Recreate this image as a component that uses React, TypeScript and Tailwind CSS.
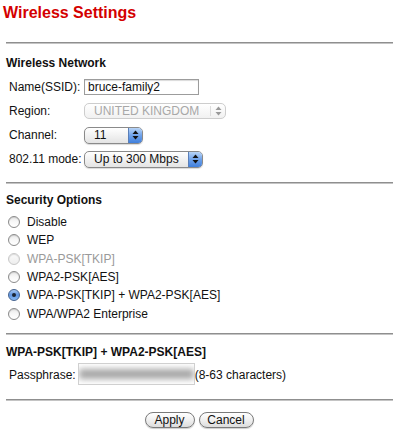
import React from "react";

const font = { fontFamily: '"Liberation Sans", Arial, sans-serif' };

function Hr() {
  return <div className="ml-[6px] w-[387px] h-[2px] border-t border-[#8f8f8f] bg-[#c4c4c4]" />;
}

function Arrows({ color = "#111" }: { color?: string }) {
  return (
    <svg width="7" height="10" viewBox="0 0 7 10">
      <path d="M3.5 0.5 L6.5 4 L0.5 4 Z" fill={color} />
      <path d="M3.5 9.5 L6.5 6 L0.5 6 Z" fill={color} />
    </svg>
  );
}

function Select({ value, width }: { value: string; width: string }) {
  return (
    <div
      className={`${width} h-[17px] flex items-stretch rounded-[5px] border border-[#8a8a8a] bg-gradient-to-b from-[#ffffff] to-[#e4e4e4] shadow-[0_1px_1px_rgba(0,0,0,0.15)] overflow-hidden`}
    >
      <div className="flex-1 pl-[9px] flex items-center text-[12px] text-[#111] leading-none">{value}</div>
      <div className="w-[14px] flex items-center justify-center border-l border-[#5a7fb8] bg-gradient-to-b from-[#b8d4f6] via-[#6fa2ea] to-[#3f7fdc]">
        <Arrows />
      </div>
    </div>
  );
}

function Radio({ checked = false, disabled = false }: { checked?: boolean; disabled?: boolean }) {
  if (checked) {
    return (
      <div className="w-[12px] h-[12px] rounded-full border border-[#43628f] bg-gradient-to-b from-[#a8c8f0] via-[#5d93e0] to-[#8cbcf4] flex items-center justify-center">
        <div className="w-[4px] h-[4px] rounded-full bg-[#1b2432]" />
      </div>
    );
  }
  return (
    <div
      className={`w-[12px] h-[12px] rounded-full border ${
        disabled ? "border-[#c8c8c8] bg-gradient-to-b from-[#fafafa] to-[#eeeeee]" : "border-[#8b8b8b] bg-gradient-to-b from-[#e9e9e9] via-[#f8f8f8] to-[#ffffff]"
      } shadow-[inset_0_1px_1px_rgba(0,0,0,0.12)]`}
    />
  );
}

function RadioRow({ label, checked, disabled }: { label: string; checked?: boolean; disabled?: boolean }) {
  return (
    <div className="h-[18.3px] flex items-center pl-[8px]">
      <Radio checked={checked} disabled={disabled} />
      <span className={`ml-[7px] text-[12px] ${disabled ? "text-[#9a9a9a]" : "text-[#111]"}`}>{label}</span>
    </div>
  );
}

export default function App() {
  return (
    <div className="w-[400px] h-[446px] bg-white overflow-hidden" style={font}>
      <div className="pt-[4px] pl-[3px] h-[22px] text-[16px] leading-[18px] font-bold text-[#d40000]">Wireless Settings</div>
      <div className="mt-[20px]">
        <Hr />
      </div>
      <div className="mt-[7px] h-[24px] flex items-center pl-[6px] text-[12px] font-bold text-[#111]">Wireless Network</div>
      <div className="h-[24px] flex items-center pl-[9px] text-[12px] text-[#111]">
        <div className="w-[75px]">Name(SSID):</div>
        <div className="w-[115px] h-[16px] border border-[#9c9c9c] shadow-[inset_0_1px_1px_rgba(0,0,0,0.15)] bg-white flex items-center pl-[3px] text-[12px]">
          bruce-family2
        </div>
      </div>
      <div className="h-[24px] flex items-center pl-[9px] text-[12px] text-[#111]">
        <div className="w-[75px]">Region:</div>
        <div className="w-[142px] h-[16px] flex items-stretch rounded-[5px] border border-[#cdcdcd] bg-gradient-to-b from-[#ffffff] to-[#f1f1f1]">
          <div className="flex-1 pl-[9px] flex items-center text-[12px] text-[#a8a8a8]">UNITED KINGDOM</div>
          <div className="w-[15px] my-[2px] flex items-center justify-center border-l border-[#dddddd]">
            <Arrows color="#9a9a9a" />
          </div>
        </div>
      </div>
      <div className="h-[24px] flex items-center pl-[9px] text-[12px] text-[#111]">
        <div className="w-[75px]">Channel:</div>
        <Select value="11" width="w-[59px]" />
      </div>
      <div className="h-[24px] flex items-center pl-[9px] text-[12px] text-[#111]">
        <div className="w-[75px]">802.11 mode:</div>
        <Select value="Up to 300 Mbps" width="w-[119px]" />
      </div>
      <div className="mt-[11px]">
        <Hr />
      </div>
      <div className="mt-[5px] h-[22px] flex items-center pl-[6px] text-[12px] font-bold text-[#111]">Security Options</div>
      <div className="mt-[2px]">
        <RadioRow label="Disable" />
        <RadioRow label="WEP" />
        <RadioRow label="WPA-PSK[TKIP]" disabled />
        <RadioRow label="WPA2-PSK[AES]" />
        <RadioRow label="WPA-PSK[TKIP] + WPA2-PSK[AES]" checked />
        <RadioRow label="WPA/WPA2 Enterprise" />
      </div>
      <div className="mt-[10px]">
        <Hr />
      </div>
      <div className="mt-[6px] h-[22px] flex items-center pl-[6px] text-[12px] font-bold text-[#111]">WPA-PSK[TKIP] + WPA2-PSK[AES]</div>
      <div className="h-[24px] flex items-start pl-[9px] text-[12px] text-[#111]">
        <div className="mt-[3px]">Passphrase:</div>
        <div className="ml-[2px] w-[117px] h-[22px] border border-[#d0d0d0] bg-white flex items-center overflow-hidden">
          <div className="w-full h-[10px] bg-[#a6a6a6] blur-[3px]" />
        </div>
        <div className="mt-[3px]">(8-63 characters)</div>
      </div>
      <div className="mt-[12px]">
        <Hr />
      </div>
      <div className="mt-[11px] flex justify-center gap-[4px] pr-[2px]">
        <div className="w-[50px] h-[16px] rounded-full border border-[#7a7a7a] bg-gradient-to-b from-[#ffffff] via-[#f0f0f0] to-[#dcdcdc] flex items-center justify-center text-[12px] text-[#111] shadow-[0_1px_1px_rgba(0,0,0,0.2)]">
          Apply
        </div>
        <div className="w-[55px] h-[16px] rounded-full border border-[#7a7a7a] bg-gradient-to-b from-[#ffffff] via-[#f0f0f0] to-[#dcdcdc] flex items-center justify-center text-[12px] text-[#111] shadow-[0_1px_1px_rgba(0,0,0,0.2)]">
          Cancel
        </div>
      </div>
    </div>
  );
}
